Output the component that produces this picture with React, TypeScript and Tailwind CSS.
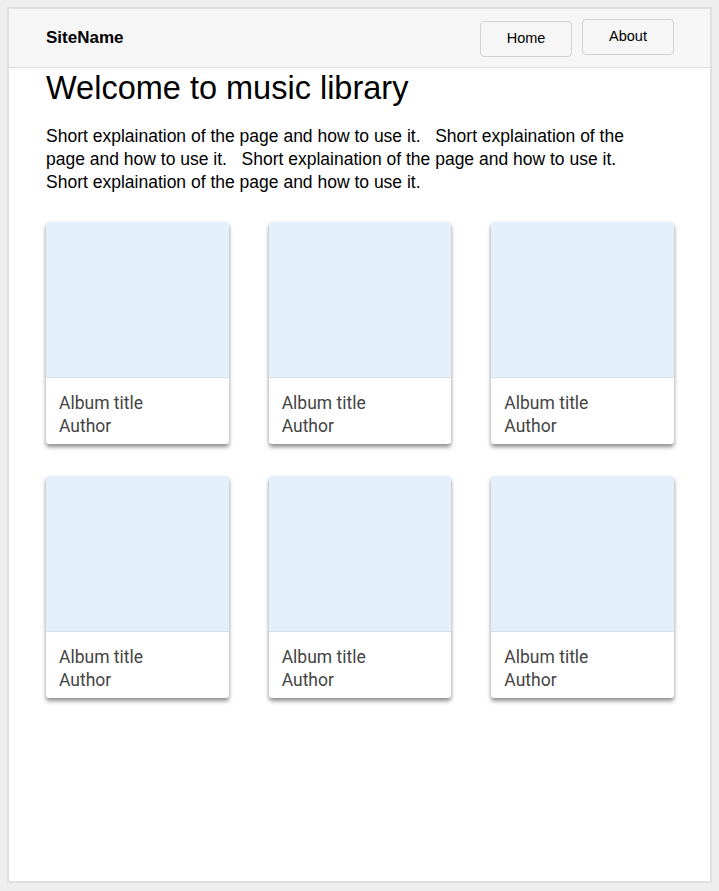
import React from 'react';

const albums = [1, 2, 3, 4, 5, 6];

const AlbumCard = () => (
  <div className="bg-white rounded-[3px] overflow-hidden shadow-[0_3px_4px_rgba(0,0,0,0.45)]">
    <div className="h-[156px] bg-[#e3f0fb] border-b border-[#d5e0ea]" />
    <div className="pl-[13px] pt-[14px] pb-[6px] font-['Roboto',sans-serif] text-[17.5px] leading-[23px] text-[#444]">
      <div>Album title</div>
      <div>Author</div>
    </div>
  </div>
);

export default function App() {
  return (
    <div className="min-h-screen bg-[#eeeeee] p-[7px] font-['Liberation_Sans',Arial,sans-serif] text-black">
      <div className="h-[876px] border-2 border-[#e0e0e0] bg-white">
        {/* Header */}
        <header className="h-[59px] bg-[#f6f6f6] border-b border-[#dddddd]">
          <div className="w-[628px] ml-[37px] h-full flex items-center justify-between">
            <span className="text-[17px] font-bold">SiteName</span>
            <nav className="flex items-center gap-[10px]">
              <button className="w-[92px] h-[36px] translate-y-[1px] border border-[#d2d2d2] rounded-[4px] bg-[#f6f6f6] text-[14.5px]">
                Home
              </button>
              <button className="w-[92px] h-[36px] -translate-y-[1px] border border-[#d2d2d2] rounded-[4px] bg-[#f6f6f6] text-[14.5px]">
                About
              </button>
            </nav>
          </div>
        </header>

        <main className="w-[628px] ml-[37px]">
          <h1 className="mt-[2px] text-[32.5px] leading-[37px]">Welcome to music library</h1>
          <p className="mt-[18px] w-[600px] text-[17.5px] leading-[23px]">
            Short explaination of the page and how to use it.{'\u00a0\u00a0 '}Short explaination of the page and how to use it.{'\u00a0\u00a0 '}Short explaination of the page and how to use it.{'\u00a0\u00a0 '}Short explaination of the page and how to use it.
          </p>

          <div className="mt-[28px] grid grid-cols-3 gap-x-[40px] gap-y-[32px]">
            {albums.map((a) => (
              <AlbumCard key={a} />
            ))}
          </div>
        </main>
      </div>
    </div>
  );
}
